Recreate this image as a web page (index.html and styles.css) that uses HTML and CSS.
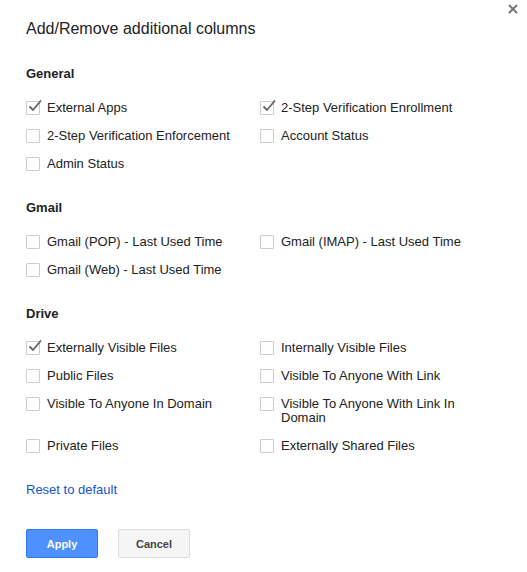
FILE: index.html
```html
<!DOCTYPE html>
<html>
<head>
<meta charset="utf-8">
<link rel="stylesheet" href="styles.css">
</head>
<body>
<div class="dialog">
  <button class="close" aria-label="Close">
    <svg width="10" height="10" viewBox="0 0 10 10"><path d="M1 1L9 9M9 1L1 9" stroke="#777" stroke-width="2"/></svg>
  </button>
  <div class="title">Add/Remove additional columns</div>

  <div class="section">
    <div class="heading">General</div>
    <div class="grid">
      <label class="item"><span class="cb checked"><svg class="tick" width="18" height="18" viewBox="0 0 18 18"><path d="M3.5 8.5L7 12L15 2.5" fill="none" stroke="#666" stroke-width="1.8"/></svg></span><span class="txt">External Apps</span></label>
      <label class="item"><span class="cb checked"><svg class="tick" width="18" height="18" viewBox="0 0 18 18"><path d="M3.5 8.5L7 12L15 2.5" fill="none" stroke="#666" stroke-width="1.8"/></svg></span><span class="txt">2-Step Verification Enrollment</span></label>
      <label class="item"><span class="cb"></span><span class="txt">2-Step Verification Enforcement</span></label>
      <label class="item"><span class="cb"></span><span class="txt">Account Status</span></label>
      <label class="item"><span class="cb"></span><span class="txt">Admin Status</span></label>
    </div>
  </div>

  <div class="section">
    <div class="heading">Gmail</div>
    <div class="grid">
      <label class="item"><span class="cb"></span><span class="txt">Gmail (POP) - Last Used Time</span></label>
      <label class="item"><span class="cb"></span><span class="txt">Gmail (IMAP) - Last Used Time</span></label>
      <label class="item"><span class="cb"></span><span class="txt">Gmail (Web) - Last Used Time</span></label>
    </div>
  </div>

  <div class="section">
    <div class="heading">Drive</div>
    <div class="grid">
      <label class="item"><span class="cb checked"><svg class="tick" width="18" height="18" viewBox="0 0 18 18"><path d="M3.5 8.5L7 12L15 2.5" fill="none" stroke="#666" stroke-width="1.8"/></svg></span><span class="txt">Externally Visible Files</span></label>
      <label class="item"><span class="cb"></span><span class="txt">Internally Visible Files</span></label>
      <label class="item"><span class="cb"></span><span class="txt">Public Files</span></label>
      <label class="item"><span class="cb"></span><span class="txt">Visible To Anyone With Link</span></label>
      <label class="item"><span class="cb"></span><span class="txt">Visible To Anyone In Domain</span></label>
      <label class="item"><span class="cb"></span><span class="txt">Visible To Anyone With Link In Domain</span></label>
      <label class="item"><span class="cb"></span><span class="txt">Private Files</span></label>
      <label class="item"><span class="cb"></span><span class="txt">Externally Shared Files</span></label>
    </div>
  </div>

  <a class="reset" href="#">Reset to default</a>

  <div class="buttons">
    <button class="btn primary">Apply</button>
    <button class="btn secondary">Cancel</button>
  </div>
</div>
</body>
</html>
```

FILE: styles.css
```css
html, body {
  margin: 0;
  padding: 0;
  background: #fff;
}
body {
  font-family: "Liberation Sans", Arial, sans-serif;
  font-size: 13px;
  color: #222;
}
.dialog {
  position: relative;
  padding: 19px 26px 0 26px;
}
.close {
  position: absolute;
  top: 4px;
  right: 9px;
  width: 10px;
  height: 10px;
  padding: 0;
  border: 0;
  background: none;
  display: block;
}
.close svg {
  display: block;
}
.title {
  font-size: 16px;
  line-height: 20px;
  color: #222;
}
.section {
  margin-top: 29px;
}
.title + .section {
  margin-top: 27px;
}
.heading {
  font-weight: bold;
  line-height: 16px;
  color: #222;
}
.grid {
  margin-top: 19px;
  display: grid;
  grid-template-columns: 234px 234px;
  row-gap: 14px;
}
.item {
  display: flex;
  align-items: flex-start;
  line-height: 14px;
  color: #222;
}
.cb {
  position: relative;
  flex: none;
  box-sizing: border-box;
  width: 14px;
  height: 14px;
  border: 1px solid #cdcdcd;
  border-radius: 1px;
  margin-right: 7px;
  background: #fff;
}
.tick {
  position: absolute;
  left: -1px;
  top: -4px;
}
.txt {
  max-width: 210px;
}
.reset {
  display: block;
  margin-top: 29px;
  line-height: 16px;
  color: #15c;
  text-decoration: none;
  width: max-content;
}
.buttons {
  margin-top: 31px;
  display: flex;
  gap: 20px;
}
.btn {
  box-sizing: border-box;
  width: 72px;
  height: 29px;
  border-radius: 2px;
  font-family: "Liberation Sans", Arial, sans-serif;
  font-size: 11px;
  font-weight: bold;
  padding: 0 8px;
}
.primary {
  background: #4d90fe;
  border: 1px solid #3079ed;
  color: #fff;
}
.secondary {
  background: #f5f5f5;
  border: 1px solid #dcdcdc;
  color: #444;
}
```
